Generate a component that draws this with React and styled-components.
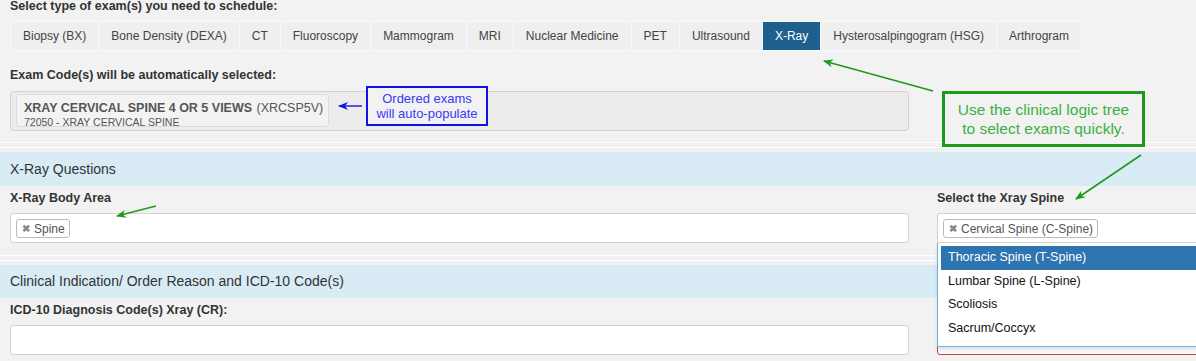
import React from "react"
import styled, { createGlobalStyle } from "styled-components"

const GlobalStyle = createGlobalStyle`
	body {
		margin: 0;
		background: #f2f2f2;
		font-family: "Liberation Sans", Arial, sans-serif;
		color: #333;
	}
`

const Page = styled.div`
	position: relative;
	width: 1196px;
	height: 361px;
	overflow: hidden;
	background: #f2f2f2;
`

const Top = styled.div`
	padding: 0 10px;
`

const Label = styled.div`
	font-size: 12.5px;
	font-weight: bold;
	line-height: 13px;
	color: #333;
	margin-top: ${(p) => p.$top || 0}px;
	margin-bottom: ${(p) => p.$bottom || 8}px;
`

const Tabs = styled.div`
	display: inline-flex;
	border: 1px solid #fafafa;
	border-radius: 4px;
	overflow: hidden;
	background: #efefef;
`

const Tab = styled.div`
	height: 28px;
	line-height: 28px;
	padding: 0 12px;
	font-size: 12px;
	color: ${(p) => (p.$active ? "#fff" : "#444")};
	background: ${(p) => (p.$active ? "#1e5f8d" : "#efefef")};
	border-left: 1px solid #fafafa;
	&:first-child {
		border-left: none;
	}
`

const CodeBox = styled.div`
	width: 899px;
	height: 40px;
	box-sizing: border-box;
	padding: 2px 5px;
	background: #ececec;
	border: 1px solid #d2d2d2;
	border-radius: 4px;
`

const CodeChip = styled.div`
	display: inline-block;
	box-sizing: border-box;
	height: 33px;
	padding: 3px 5px 0 7px;
	background: #f3f3f3;
	border: 1px solid #dcdcdc;
	border-radius: 3px;
	color: #555;
	white-space: nowrap;
	strong {
		font-size: 12.5px;
		line-height: 14px;
	}
	span {
		font-size: 12.5px;
	}
	small {
		display: block;
		font-size: 10.5px;
		line-height: 12px;
	}
`

const Divider = styled.div`
	height: 4px;
	margin-top: ${(p) => p.$top}px;
	margin-bottom: 4px;
	border-top: 1px solid #fff;
	border-bottom: 1px solid #fff;
`

const SectionHead = styled.div`
	height: ${(p) => p.$height}px;
	line-height: ${(p) => p.$height}px;
	padding: 0 10px;
	background: #d9ebf5;
	font-size: 14px;
	color: #333;
`

const FieldGrid = styled.div`
	display: grid;
	grid-template-columns: 899px 287px;
	column-gap: 28px;
	padding: 6px 10px 0;
`

const Field = styled.div`
	position: relative;
`

const SelectBox = styled.div`
	height: 30px;
	box-sizing: border-box;
	padding: 4px 5px;
	background: #fff;
	border: 1px solid ${(p) => (p.$error ? "#b94a48" : "#d4d4d4")};
	border-radius: 3px;
	${(p) => p.$open && "border-right: none; border-radius: 3px 0 0 0;"}
`

const Chip = styled.span`
	display: inline-flex;
	align-items: center;
	gap: 4px;
	height: 19px;
	box-sizing: border-box;
	padding: 0 4px 0 5px;
	border: 1px solid #bbb;
	border-radius: 3px;
	background: #fff;
	font-size: 12px;
	color: #555;
	b {
		font-size: 10px;
		color: #888;
	}
`

const Dropdown = styled.ul`
	position: absolute;
	box-sizing: border-box;
	margin: 0;
	padding: 3px 0 0 3px;
	list-style: none;
	background: #fff;
	border: 1px solid #6ab0ea;
	border-top: none;
	box-shadow: 0 3px 4px rgba(0, 0, 0, 0.12);
`

const Option = styled.li`
	height: 23.5px;
	line-height: 23.5px;
	padding: 0 7px;
	font-size: 12.5px;
	color: ${(p) => (p.$active ? "#fff" : "#111")};
	background: ${(p) => (p.$active ? "#2e74b0" : "transparent")};
`

const Note = styled.div`
	position: absolute;
	box-sizing: border-box;
	text-align: center;
	background: #f2f2f2;
	left: ${(p) => p.$x}px;
	top: ${(p) => p.$y}px;
	width: ${(p) => p.$w}px;
	height: ${(p) => p.$h}px;
	border: ${(p) => p.$border};
	color: ${(p) => p.$color};
	font-size: ${(p) => p.$size}px;
	line-height: ${(p) => p.$lh}px;
	padding-top: ${(p) => p.$pt}px;
`

const Arrows = styled.svg`
	position: absolute;
	left: 0;
	top: 0;
	pointer-events: none;
`

const tabs = [
	"Biopsy (BX)",
	"Bone Density (DEXA)",
	"CT",
	"Fluoroscopy",
	"Mammogram",
	"MRI",
	"Nuclear Medicine",
	"PET",
	"Ultrasound",
	"X-Ray",
	"Hysterosalpingogram (HSG)",
	"Arthrogram",
]

const spineOptions = [
	"Thoracic Spine (T-Spine)",
	"Lumbar Spine (L-Spine)",
	"Scoliosis",
	"Sacrum/Coccyx",
]

const App = () => (
	<Page>
		<GlobalStyle />
		<Top>
			<Label $bottom={8}>Select type of exam(s) you need to schedule:</Label>
			<Tabs>
				{tabs.map((t) => (
					<Tab key={t} $active={t === "X-Ray"}>
						{t}
					</Tab>
				))}
			</Tabs>
			<Label $top={18} $bottom={9}>
				Exam Code(s) will be automatically selected:
			</Label>
			<CodeBox>
				<CodeChip>
					<strong>XRAY CERVICAL SPINE 4 OR 5 VIEWS</strong> <span>(XRCSP5V)</span>
					<small>72050 - XRAY CERVICAL SPINE</small>
				</CodeChip>
			</CodeBox>
		</Top>

		<Divider $top={11} />
		<SectionHead $height={34}>X-Ray Questions</SectionHead>
		<FieldGrid>
			<Field>
				<Label>X-Ray Body Area</Label>
				<SelectBox>
					<Chip>
						<b>✖</b>Spine
					</Chip>
				</SelectBox>
			</Field>
			<Field>
				<Label>Select the Xray Spine</Label>
				<SelectBox $open>
					<Chip>
						<b>✖</b>Cervical Spine (C-Spine)
					</Chip>
				</SelectBox>
			</Field>
		</FieldGrid>

		<Divider $top={12} />
		<SectionHead $height={33}>Clinical Indication/ Order Reason and ICD-10 Code(s)</SectionHead>
		<FieldGrid>
			<Field>
				<Label>ICD-10 Diagnosis Code(s) Xray (CR):</Label>
				<SelectBox />
			</Field>
			<Field>
				<Label>{"\u00a0"}</Label>
				<SelectBox $error />
			</Field>
		</FieldGrid>

		<Dropdown style={{ left: 937, top: 243, width: 270, height: 104 }}>
			{spineOptions.map((o, i) => (
				<Option key={o} $active={i === 0}>
					{o}
				</Option>
			))}
		</Dropdown>

		<Note $x={366} $y={86} $w={122} $h={40} $border="2px solid #1212e6" $color="#3a3af5" $size={13} $lh={15} $pt={3}>
			Ordered exams
			<br />
			will auto-populate
		</Note>
		<Note $x={942} $y={91} $w={203} $h={56} $border="3px solid #1c9a1c" $color="#3cb043" $size={15.5} $lh={19} $pt={6}>
			Use the clinical logic tree
			<br />
			to select exams quickly.
		</Note>

		<Arrows width="1196" height="361">
			<defs>
				<marker id="gh" markerWidth="10" markerHeight="8" refX="9" refY="4" orient="auto" markerUnits="userSpaceOnUse">
					<path d="M0,0 L10,4 L0,8 L3,4 Z" fill="#1e9a1e" />
				</marker>
				<marker id="bh" markerWidth="10" markerHeight="8" refX="9" refY="4" orient="auto" markerUnits="userSpaceOnUse">
					<path d="M0,0 L10,4 L0,8 L3,4 Z" fill="#1414e0" />
				</marker>
			</defs>
			<line x1="933" y1="91" x2="824" y2="61" stroke="#1e9a1e" strokeWidth="1.6" markerEnd="url(#gh)" />
			<line x1="1141" y1="155" x2="1076" y2="199" stroke="#1e9a1e" strokeWidth="1.6" markerEnd="url(#gh)" />
			<line x1="156" y1="206" x2="117" y2="216" stroke="#1e9a1e" strokeWidth="1.6" markerEnd="url(#gh)" />
			<line x1="362" y1="106" x2="339" y2="106" stroke="#1414e0" strokeWidth="1.4" markerEnd="url(#bh)" />
		</Arrows>
	</Page>
)

export default App
